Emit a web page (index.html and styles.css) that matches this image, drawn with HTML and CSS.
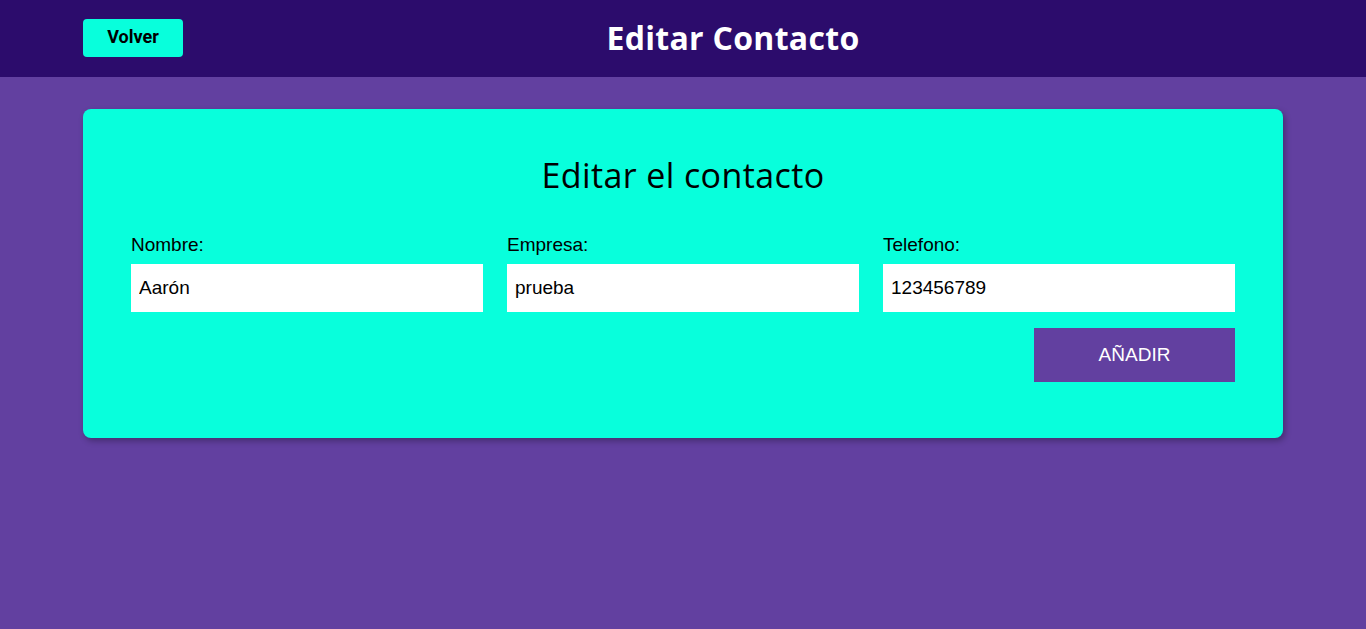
FILE: index.html
```html
<!DOCTYPE html>
<html lang="es">
<head>
<meta charset="utf-8">
<title>Editar Contacto</title>
<link rel="stylesheet" href="styles.css">
</head>
<body>
<header class="topbar">
  <div class="topbar-inner">
    <button class="btn-back" type="button">Volver</button>
    <h1 class="page-title">Editar Contacto</h1>
  </div>
</header>
<main class="main">
  <section class="card">
    <h2 class="card-title">Editar el contacto</h2>
    <form class="form">
      <div class="fields">
        <label class="field">
          <span class="field-label">Nombre:</span>
          <input class="field-input" type="text" value="Aarón">
        </label>
        <label class="field">
          <span class="field-label">Empresa:</span>
          <input class="field-input" type="text" value="prueba">
        </label>
        <label class="field">
          <span class="field-label">Telefono:</span>
          <input class="field-input" type="text" value="123456789">
        </label>
      </div>
      <div class="actions">
        <button class="btn-add" type="button">AÑADIR</button>
      </div>
    </form>
  </section>
</main>
</body>
</html>
```
FILE: styles.css
```css
html, body {
  margin: 0;
  padding: 0;
}
body {
  background: #6240a0;
  font-family: "Liberation Sans", Arial, sans-serif;
  min-height: 629px;
}
.topbar {
  background: #2c0c6c;
  height: 77px;
}
.topbar-inner {
  width: 1200px;
  margin: 0 auto;
  display: flex;
  align-items: flex-start;
  padding-top: 19px;
  box-sizing: border-box;
  height: 77px;
}
.btn-back {
  width: 100px;
  height: 38px;
  background: #08ffdc;
  border: none;
  border-radius: 4px;
  font-family: Roboto, "Liberation Sans", sans-serif;
  font-weight: 700;
  font-size: 18px;
  line-height: 36px;
  color: #000;
  padding: 0 0 2px;
}
.page-title {
  flex: 1;
  margin: 0;
  text-align: center;
  color: #fff;
  font-family: "Open Sans", sans-serif;
  font-weight: 700;
  font-size: 32px;
  line-height: 38px;
  letter-spacing: 0.3px;
}
.main {
  width: 1200px;
  margin: 32px auto 0;
}
.card {
  background: #08ffdc;
  border-radius: 8px;
  padding: 44px 48px 56px;
  box-shadow: 2px 3px 6px rgba(0, 0, 0, 0.3);
}
.card-title {
  margin: 0;
  text-align: center;
  font-family: "Open Sans", sans-serif;
  font-weight: 400;
  font-size: 34px;
  line-height: 44px;
  letter-spacing: 0.4px;
  color: #000;
}
.form {
  margin-top: 36px;
}
.fields {
  display: grid;
  grid-template-columns: repeat(3, 1fr);
  gap: 24px;
}
.field {
  display: flex;
  flex-direction: column;
  gap: 8px;
}
.field-label {
  font-size: 19px;
  line-height: 23px;
  color: #000;
}
.field-input {
  box-sizing: border-box;
  height: 48px;
  border: none;
  outline: none;
  padding: 0 8px;
  font-family: "Liberation Sans", Arial, sans-serif;
  font-size: 19px;
  color: #000;
  background: #fff;
}
.actions {
  display: flex;
  justify-content: flex-end;
  margin-top: 16px;
}
.btn-add {
  width: 201px;
  height: 54px;
  background: #6240a0;
  color: #fff;
  border: none;
  font-family: "Liberation Sans", Arial, sans-serif;
  font-size: 19px;
  padding: 0;
}
```
